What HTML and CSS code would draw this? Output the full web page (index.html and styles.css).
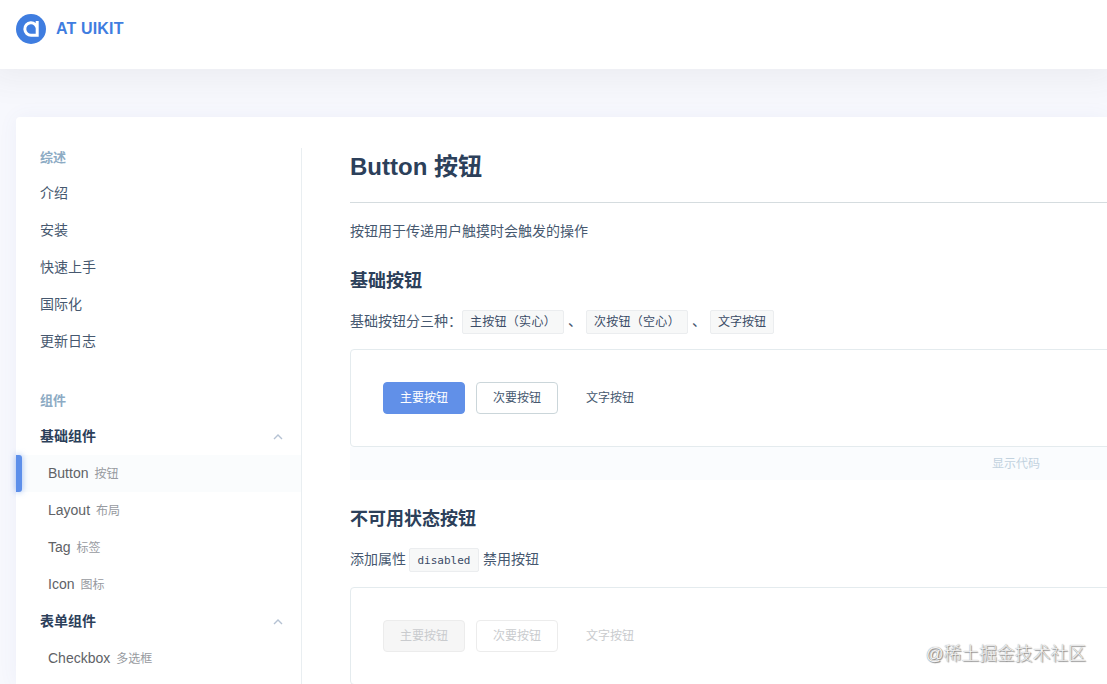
FILE: index.html
```html
<!DOCTYPE html>
<html lang="zh">
<head>
    <meta charset="UTF-8">
    <meta name="viewport" content="width=device-width, initial-scale=1.0">
    <title>AT UIKIT</title>
    <link rel="stylesheet" href="styles.css">
</head>
<body>
    <header class="header">
        <svg class="logo" viewBox="0 0 30 30" width="30" height="30">
            <circle cx="15" cy="15" r="15" fill="#3f7de0"/>
            <path d="M21.2 7V21.2H15.2A6.2 6.2 0 1 1 21.2 14.5" fill="none" stroke="#fff" stroke-width="3"/>
        </svg>
        <span class="brand">AT UIKIT</span>
    </header>

    <div class="container">
        <aside class="sidebar">
            <h4 class="nav-title">综述</h4>
            <ul class="nav-list">
                <li class="nav-item">介绍</li>
                <li class="nav-item">安装</li>
                <li class="nav-item">快速上手</li>
                <li class="nav-item">国际化</li>
                <li class="nav-item">更新日志</li>
            </ul>
            <h4 class="nav-title">组件</h4>
            <ul class="nav-list">
                <li class="nav-item nav-group">基础组件
                    <svg class="arrow" viewBox="0 0 10 6" width="10" height="6"><path d="M1 5l4-4 4 4" fill="none" stroke="#b5c2d3" stroke-width="1.4"/></svg>
                </li>
                <li class="nav-item nav-sub active">Button <span>按钮</span></li>
                <li class="nav-item nav-sub">Layout <span>布局</span></li>
                <li class="nav-item nav-sub">Tag <span>标签</span></li>
                <li class="nav-item nav-sub">Icon <span>图标</span></li>
                <li class="nav-item nav-group">表单组件
                    <svg class="arrow" viewBox="0 0 10 6" width="10" height="6"><path d="M1 5l4-4 4 4" fill="none" stroke="#b5c2d3" stroke-width="1.4"/></svg>
                </li>
                <li class="nav-item nav-sub">Checkbox <span>多选框</span></li>
            </ul>
        </aside>

        <main class="content">
            <h1>Button 按钮</h1>
            <p class="intro">按钮用于传递用户触摸时会触发的操作</p>

            <h2>基础按钮</h2>
            <p>基础按钮分三种：<code class="wide">主按钮（实心）</code>、<code class="wide">次按钮（空心）</code>、<code>文字按钮</code></p>
            <div class="demo">
                <div class="demo-body">
                    <button class="btn btn-primary">主要按钮</button>
                    <button class="btn">次要按钮</button>
                    <button class="btn btn-text">文字按钮</button>
                </div>
                <div class="demo-toggle">显示代码</div>
            </div>

            <h2>不可用状态按钮</h2>
            <p>添加属性<code class="word">disabled</code>禁用按钮</p>
            <div class="demo">
                <div class="demo-body">
                    <button class="btn btn-primary" disabled>主要按钮</button>
                    <button class="btn" disabled>次要按钮</button>
                    <button class="btn btn-text" disabled>文字按钮</button>
                </div>
            </div>
        </main>
    </div>

    <div class="watermark">@稀土掘金技术社区</div>
</body>
</html>
```

FILE: styles.css
```css
* {
    box-sizing: border-box;
}
body {
    margin: 0;
    height: 684px;
    overflow: hidden;
    background: #f7f8fd;
    color: #46586f;
    font-family: "Liberation Sans", "Noto Sans CJK SC", sans-serif;
    font-size: 14px;
}
.header {
    display: flex;
    align-items: flex-start;
    height: 69px;
    padding: 14px 16px;
    background: #fff;
    box-shadow: 0 0 32px 12px rgba(70, 75, 60, 0.06);
}
.brand {
    margin-left: 10px;
    color: #3f7de0;
    font-size: 16px;
    font-weight: bold;
    letter-spacing: 0.15px;
    line-height: 29px;
}
.container {
    position: relative;
    display: flex;
    height: 567px;
    margin: 48px 0 0 16px;
    padding-top: 31px;
    background: #fff;
    border-radius: 4px 0 0 0;
    box-shadow: 0 0 20px rgba(90, 100, 190, 0.06);
}
.sidebar {
    width: 286px;
    flex-shrink: 0;
    border-right: 1px solid #e9eef1;
}
.nav-title {
    margin: 0;
    padding-left: 24px;
    height: 26px;
    color: #8dabc4;
    font-size: 13px;
    line-height: 19px;
}
.nav-list {
    margin: 0 0 32px;
    padding: 0;
    list-style: none;
}
.nav-list + .nav-title {
    height: 27px;
}
.nav-item {
    display: flex;
    align-items: center;
    height: 37px;
    padding: 0 0 2px 24px;
}
.nav-group {
    justify-content: space-between;
    padding-right: 18px;
    padding-bottom: 4px;
    color: #2c405a;
    font-weight: bold;
}
.arrow {
    margin-top: 5px;
}
.nav-sub {
    padding-left: 32px;
    color: #606266;
}
.nav-sub span {
    margin-left: 6px;
    color: #979a9f;
    font-size: 12px;
}
.active {
    padding-left: 0;
    background: #fafcfd;
}
.active::before {
    content: "";
    width: 6px;
    height: 37px;
    margin: 2px 26px 0 0;
    border-radius: 0 3px 3px 0;
    background: #5d8fea;
    box-shadow: 0 0 6px rgba(93, 143, 234, 0.6);
}
.content {
    width: 1332px;
    flex-shrink: 0;
    margin-left: 48px;
}
h1 {
    height: 55px;
    margin: 0 0 18px;
    border-bottom: 1px solid #d5dcdf;
    color: #2c405a;
    font-size: 24px;
    line-height: 37px;
}
h2 {
    margin: 26px 0 16px;
    color: #2c405a;
    font-size: 18px;
    line-height: 26px;
}
p {
    height: 24px;
    margin: 0 0 15px;
    line-height: 20px;
    white-space: nowrap;
}
.intro {
    height: 21px;
    margin: 0;
}
code {
    display: inline-block;
    height: 24px;
    margin: 0 4px;
    padding: 0 7px;
    border: 1px solid #ebedef;
    border-radius: 2px;
    background: #f7f8f8;
    color: #3a4b66;
    font-family: "DejaVu Sans Mono", "Noto Sans CJK SC", monospace;
    font-size: 12px;
    line-height: 23px;
}
.wide {
    margin-left: 0;
    letter-spacing: 0.28px;
}
.wide + .wide {
    margin-left: 4px;
}
.word {
    padding: 0 7.5px;
    margin: 0 4px 0 3px;
    font-size: 11px;
}
.demo-body {
    display: flex;
    height: 98px;
    padding: 32px;
    border: 1px solid #e4ebee;
    border-radius: 4px;
}
.btn {
    width: 82px;
    height: 32px;
    margin-right: 11px;
    padding: 0 0 3px;
    border: 1px solid #cbd6da;
    border-radius: 4px;
    background: #fff;
    color: #46586f;
    font-family: inherit;
    font-size: 12px;
}
.btn-primary {
    border-color: #6190e8;
    background: #6190e8;
    color: #fff;
}
.btn:disabled {
    border-color: #ececec;
    color: #c9cbce;
}
.btn-primary:disabled {
    background: #f6f6f6;
}
.btn-text,
.btn-text:disabled {
    border-color: transparent;
}
.demo-toggle {
    height: 33px;
    background: #fafcfe;
    color: #c2d2de;
    font-size: 12px;
    line-height: 35px;
    text-align: center;
}
.watermark {
    position: absolute;
    right: 21px;
    bottom: 17px;
    color: #f4f4f4;
    font-size: 17.8px;
    font-weight: 300;
    line-height: 26px;
    text-shadow: 0 0 1px #777, 1px 1px 1px #888;
}
```
